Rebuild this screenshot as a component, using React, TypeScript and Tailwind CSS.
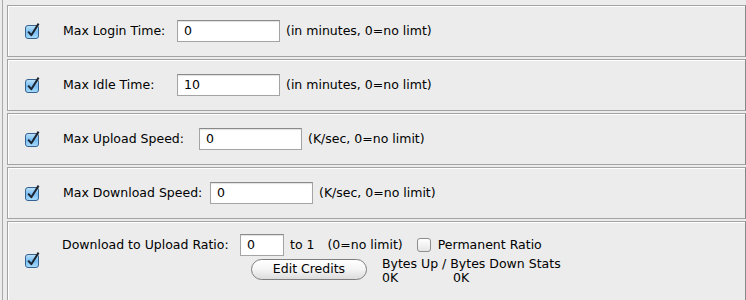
import React from 'react';

function Check({ on = true }: { on?: boolean }) {
  if (!on) {
    return (
      <div className="w-[14px] h-[14px] rounded-[3px] border border-[#8d8d8d] bg-gradient-to-b from-white to-[#e6e6e6] shrink-0" />
    );
  }
  return (
    <svg width="17" height="18" viewBox="0 0 17 18" className="shrink-0">
      <defs>
        <linearGradient id="cbx" x1="0" y1="0" x2="0" y2="1">
          <stop offset="0" stopColor="#bfe3fb" />
          <stop offset="0.5" stopColor="#78bdf2" />
          <stop offset="1" stopColor="#a9dcfd" />
        </linearGradient>
      </defs>
      <rect x="0.5" y="3.5" width="13" height="13" rx="2.5" fill="url(#cbx)" stroke="#35628f" />
      <path d="M3.2 9.6 L6.3 13.2 L13.6 1.6" fill="none" stroke="#1d2530" strokeWidth="2" strokeLinejoin="round" />
    </svg>
  );
}

function Field({ value, w = 'w-[103px]' }: { value: string; w?: string }) {
  return (
    <div
      className={`${w} h-[22px] bg-white border border-[#a4a4a4] border-t-[#8a8a8a] shadow-[inset_0_1px_1px_rgba(0,0,0,0.12)] pl-[6px] flex items-center shrink-0`}
    >
      {value}
    </div>
  );
}

const rows = [
  { label: 'Max Login Time:', lw: 'w-[114px]', value: '0', note: '(in minutes, 0=no limt)' },
  { label: 'Max Idle Time:', lw: 'w-[114px]', value: '10', note: '(in minutes, 0=no limt)' },
  { label: 'Max Upload Speed:', lw: 'w-[136px]', value: '0', note: '(K/sec, 0=no limit)' },
  { label: 'Max Download Speed:', lw: 'w-[147px]', value: '0', note: '(K/sec, 0=no limit)' },
];

export default function App() {
  return (
    <div
      className="w-[746px] h-[300px] overflow-hidden bg-[#ececec] pl-[2px] text-[12.5px] text-black"
      style={{ fontFamily: '"DejaVu Sans", "Liberation Sans", sans-serif' }}
    >
      <div className="h-full border-l border-[#a9a9a9] pl-[4px] pt-[5px] flex flex-col gap-[2px]">
        {rows.map((r) => (
          <div
            key={r.label}
            className="h-[52px] shrink-0 border border-[#a3a3a3] border-r-[#888] shadow-[inset_1px_1px_0_#fff] flex items-center pl-[17px]"
          >
            <div className="mt-[-1px]">
              <Check />
            </div>
            <div className={`${r.lw} ml-[21px] shrink-0`}>{r.label}</div>
            <Field value={r.value} />
            <div className="ml-[6px]">{r.note}</div>
          </div>
        ))}

        <div className="h-[80px] shrink-0 border border-[#a3a3a3] border-r-[#888] shadow-[inset_1px_1px_0_#fff] flex items-center pl-[17px]">
          <div className="mt-[-3px]">
            <Check />
          </div>
          <div className="ml-[20px] flex flex-col mt-[-2px]">
            <div className="flex items-center h-[20px]">
              <div className="w-[178px] shrink-0">Download to Upload Ratio:</div>
              <Field value="0" w="w-[44px] h-[20px]" />
              <div className="ml-[6px]">to 1</div>
              <div className="ml-[13px]">(0=no limit)</div>
              <div className="ml-[14px]">
                <Check on={false} />
              </div>
              <div className="ml-[7px]">Permanent Ratio</div>
            </div>
            <div className="flex items-start mt-[2px]">
              <div className="ml-[189px] w-[116px] h-[21px] mt-[2px] rounded-full border border-[#7e7e7e] bg-gradient-to-b from-white via-[#f4f4f4] to-[#dcdcdc] flex items-center justify-center shrink-0">
                Edit Credits
              </div>
              <div className="ml-[15px] flex flex-col leading-[14px]">
                <div>Bytes Up / Bytes Down Stats</div>
                <div className="flex">
                  <div className="w-[71px]">0K</div>
                  <div>0K</div>
                </div>
              </div>
            </div>
          </div>
        </div>
      </div>
    </div>
  );
}
